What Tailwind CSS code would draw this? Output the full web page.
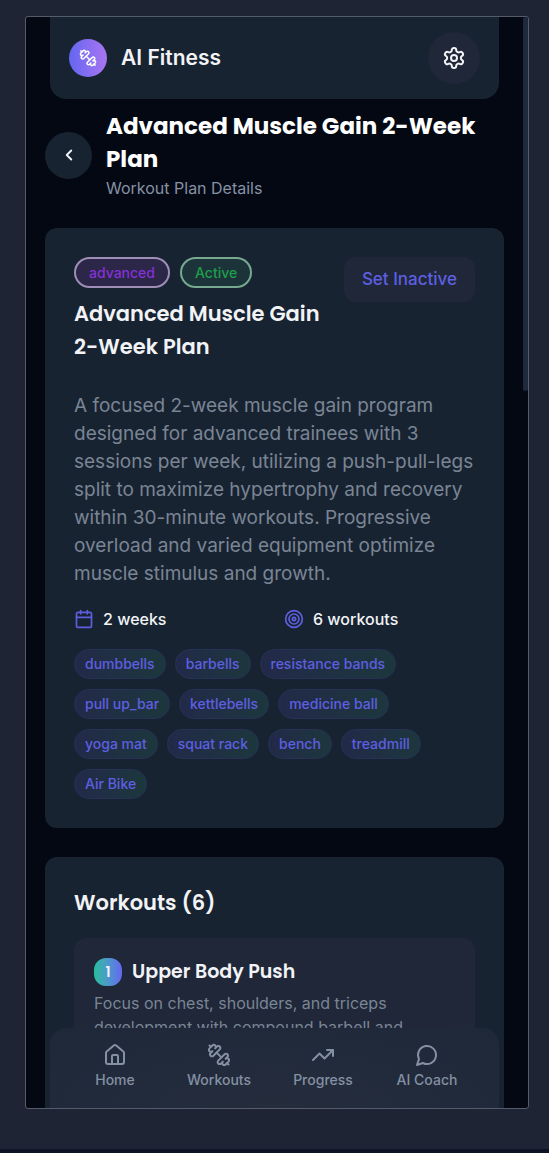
<!DOCTYPE html>
<html lang="en">
<head>
<meta charset="utf-8">
<meta name="viewport" content="width=device-width, initial-scale=1">
<title>AI Fitness</title>
<script src="https://cdn.jsdelivr.net/npm/@tailwindcss/browser@4"></script>
</head>
<body class="flex h-screen flex-col border-b-4 border-[#0d1325] bg-[#1e2433] pt-4 pr-5 pb-10 pl-[25px] font-['Inter',sans-serif] text-[#f1f3f6]">

<svg class="hidden" aria-hidden="true">
  <symbol id="dumbbell" viewBox="0 0 24 24" fill="none" stroke="currentColor" stroke-width="2" stroke-linecap="round" stroke-linejoin="round">
    <path d="M14.4 14.4 9.6 9.6"/>
    <path d="M18.657 21.485a2 2 0 1 1-2.829-2.828l-1.767 1.768a2 2 0 1 1-2.829-2.829l6.364-6.364a2 2 0 1 1 2.829 2.829l-1.768 1.767a2 2 0 1 1 2.828 2.829z"/>
    <path d="m21.5 21.5-1.4-1.4"/><path d="M3.9 3.9 2.5 2.5"/>
    <path d="M6.404 12.768a2 2 0 1 1-2.829-2.829l1.768-1.767a2 2 0 1 1-2.828-2.829l2.828-2.828a2 2 0 1 1 2.829 2.828l1.767-1.768a2 2 0 1 1 2.829 2.829z"/>
  </symbol>
</svg>

<div class="relative flex min-h-0 flex-1 overflow-hidden rounded-[3px] border border-[#545b6b] bg-[#030813]">
  <div class="min-w-0 flex-1 overflow-hidden">
    <header class="mx-6 flex h-[82px] items-center rounded-b-2xl bg-[#182331] px-[19px]">
      <span class="flex size-[38px] items-center justify-center rounded-full bg-linear-to-r from-[#6366f1] to-[#a875f0] text-white"><svg class="size-[18px]"><use href="#dumbbell"/></svg></span>
      <span class="ml-[14px] flex-1 text-[21px] font-semibold">AI Fitness</span>
      <button type="button" aria-label="Settings" class="flex size-[52px] items-center justify-center rounded-full bg-[#1f2738]">
        <svg class="size-6" viewBox="0 0 24 24" fill="none" stroke="currentColor" stroke-width="2" stroke-linecap="round" stroke-linejoin="round"><path d="M12.22 2h-.44a2 2 0 0 0-2 2v.18a2 2 0 0 1-1 1.73l-.43.25a2 2 0 0 1-2 0l-.15-.08a2 2 0 0 0-2.73.73l-.22.38a2 2 0 0 0 .73 2.73l.15.1a2 2 0 0 1 1 1.72v.51a2 2 0 0 1-1 1.74l-.15.09a2 2 0 0 0-.73 2.73l.22.38a2 2 0 0 0 2.73.73l.15-.08a2 2 0 0 1 2 0l.43.25a2 2 0 0 1 1 1.73V20a2 2 0 0 0 2 2h.44a2 2 0 0 0 2-2v-.18a2 2 0 0 1 1-1.73l.43-.25a2 2 0 0 1 2 0l.15.08a2 2 0 0 0 2.73-.73l.22-.39a2 2 0 0 0-.73-2.73l-.15-.08a2 2 0 0 1-1-1.74v-.5a2 2 0 0 1 1-1.74l.15-.09a2 2 0 0 0 .73-2.73l-.22-.38a2 2 0 0 0-2.73-.73l-.15.08a2 2 0 0 1-2 0l-.43-.25a2 2 0 0 1-1-1.73V4a2 2 0 0 0-2-2z"/><circle cx="12" cy="12" r="3"/></svg>
      </button>
    </header>

    <main class="px-[19px] pt-[11px]">
      <div class="flex items-center gap-[14px]">
        <button type="button" aria-label="Back" class="flex size-[47px] shrink-0 items-center justify-center rounded-full bg-[#182331]">
          <svg class="size-[18px]" viewBox="0 0 24 24" fill="none" stroke="currentColor" stroke-width="2.5" stroke-linecap="round" stroke-linejoin="round"><path d="m15 18-6-6 6-6"/></svg>
        </button>
        <div>
          <h1 class="font-['Poppins','Inter',sans-serif] text-[23px] leading-[33px] font-bold text-white">Advanced Muscle Gain 2-Week Plan</h1>
          <p class="text-base leading-6 text-[#8692a5]">Workout Plan Details</p>
        </div>
      </div>

      <section class="mt-7 rounded-xl bg-[#182331] p-[29px]">
        <div class="flex items-start justify-between">
          <div class="w-[260px]">
            <div class="flex gap-[10px]">
              <span class="flex h-[31px] items-center rounded-full border-2 border-[#bba8d0]/80 bg-[#2c2649] px-[13px] text-sm font-medium text-[#8531d5]">advanced</span>
              <span class="flex h-[31px] items-center rounded-full border-2 border-[#8dc7a5]/80 bg-[#1c3439] px-[13px] text-sm font-medium text-[#1c9f4b]">Active</span>
            </div>
            <h2 class="mt-[9px] font-['Poppins','Inter',sans-serif] text-[21px] leading-[33px] font-semibold">Advanced Muscle Gain 2-Week Plan</h2>
          </div>
          <button type="button" class="h-[45px] shrink-0 rounded-xl bg-[#1f2738] px-[18px] text-[17px] font-medium text-[#5e5fe0]">Set Inactive</button>
        </div>
        <p class="mt-[29px] text-[19px] leading-7 text-[#7a8595]">A focused 2-week muscle gain program designed for advanced trainees with 3 sessions per week, utilizing a push-pull-legs split to maximize hypertrophy and recovery within 30-minute workouts. Progressive overload and varied equipment optimize muscle stimulus and growth.</p>
        <div class="mt-[19px] grid grid-cols-2 gap-[19px] text-base leading-6 font-medium">
          <div class="flex items-center gap-[9px]">
            <svg class="size-5 text-[#5e5fe0]" viewBox="0 0 24 24" fill="none" stroke="currentColor" stroke-width="2" stroke-linecap="round" stroke-linejoin="round"><path d="M8 2v4M16 2v4M3 10h18"/><rect x="3" y="4" width="18" height="18" rx="2"/></svg>
            <span>2 weeks</span>
          </div>
          <div class="flex items-center gap-[9px]">
            <svg class="size-5 text-[#5e5fe0]" viewBox="0 0 24 24" fill="none" stroke="currentColor" stroke-width="2"><circle cx="12" cy="12" r="10"/><circle cx="12" cy="12" r="6"/><circle cx="12" cy="12" r="2"/></svg>
            <span>6 workouts</span>
          </div>
        </div>
        <ul class="mt-[18px] flex flex-wrap gap-x-[9px] gap-y-[10px] text-sm leading-7 font-medium text-[#5e5fe0] *:rounded-full *:border *:border-[#273157] *:bg-linear-to-r *:from-[#222949] *:to-[#1c373d] *:px-[10px]">
          <li>dumbbells</li><li>barbells</li><li>resistance bands</li><li>pull up_bar</li><li>kettlebells</li><li>medicine ball</li><li>yoga mat</li><li>squat rack</li><li>bench</li><li>treadmill</li><li>Air Bike</li>
        </ul>
      </section>

      <section class="mt-[29px] rounded-xl bg-[#182331] p-[29px] pb-24">
        <h2 class="font-['Poppins','Inter',sans-serif] text-[21px] leading-[33px] font-semibold">Workouts (6)</h2>
        <article class="mt-[19px] rounded-xl bg-[#1f2738] p-5">
          <div class="flex items-center gap-[10px]">
            <span class="flex size-7 items-center justify-center rounded-xl bg-linear-to-r from-[#25bd9b] to-[#6366f1] font-['Poppins','Inter',sans-serif] text-sm font-semibold">1</span>
            <h3 class="font-['Poppins','Inter',sans-serif] text-[19px] leading-7 font-semibold">Upper Body Push</h3>
          </div>
          <p class="mt-[5px] text-base leading-6 text-[#7a8595]">Focus on chest, shoulders, and triceps development with compound barbell and dumbbell movements.</p>
        </article>
      </section>
    </main>
  </div>

  <div class="w-[5px] shrink-0"><div class="h-[374px] rounded-[3px] bg-[#1e293b]"></div></div>

  <nav class="absolute right-[29px] bottom-0 left-6 grid h-20 grid-cols-4 rounded-t-2xl bg-radial-[at_50%_100%] from-[#252d3d] to-[#1e2838] pt-[15px] pr-5 pl-[13px] text-sm leading-5 font-medium text-[#8490a3]">
    <a href="#home" class="flex flex-col items-center gap-[3px]"><svg class="size-6" viewBox="0 0 24 24" fill="none" stroke="currentColor" stroke-width="2" stroke-linecap="round" stroke-linejoin="round"><path d="M15 21v-8a1 1 0 0 0-1-1h-4a1 1 0 0 0-1 1v8"/><path d="M3 10a2 2 0 0 1 .709-1.528l7-5.999a2 2 0 0 1 2.582 0l7 5.999A2 2 0 0 1 21 10v9a2 2 0 0 1-2 2H5a2 2 0 0 1-2-2z"/></svg>Home</a>
    <a href="#workouts" class="flex flex-col items-center gap-[3px]"><svg class="size-6"><use href="#dumbbell"/></svg>Workouts</a>
    <a href="#progress" class="flex flex-col items-center gap-[3px]"><svg class="size-6" viewBox="0 0 24 24" fill="none" stroke="currentColor" stroke-width="2" stroke-linecap="round" stroke-linejoin="round"><path d="m22 7-8.500 8.500-5-5L2 17"/><path d="M16 7h6v6"/></svg>Progress</a>
    <a href="#coach" class="flex flex-col items-center gap-[3px]"><svg class="size-6" viewBox="0 0 24 24" fill="none" stroke="currentColor" stroke-width="2" stroke-linecap="round" stroke-linejoin="round"><path d="M7.900 20A9 9 0 1 0 4 16.100L2 22Z"/></svg>AI Coach</a>
  </nav>
</div>
</body>
</html>
